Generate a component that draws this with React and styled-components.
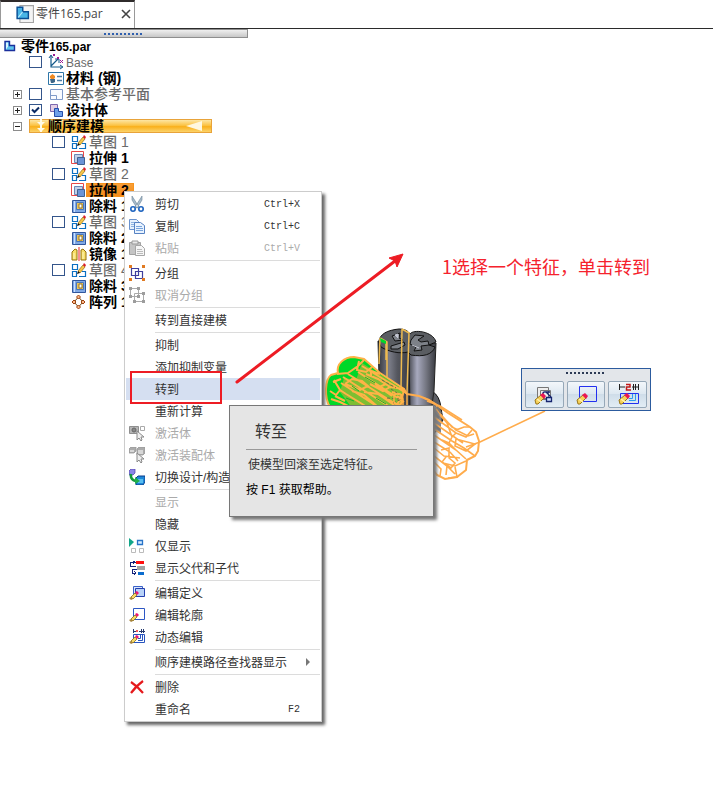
import React from "react";
import styled, { createGlobalStyle, css } from "styled-components";

function App() {
  return (
    <>
      <GlobalStyle />
      <Page>
        <TabStrip>
          <Tab>
            <PartTabIcon />
            <TabName href="#part">零件165.par</TabName>
            <CloseTab aria-label="关闭">
              <Icon $size={10} viewBox="0 0 10 10">
                <path d="M1 1L9 9M9 1L1 9" stroke="#444" strokeWidth="1.6" />
              </Icon>
            </CloseTab>
          </Tab>
        </TabStrip>
        <Workspace>
          <TreePane>
            <Grip>
              <Dots />
            </Grip>
            <Tree>
              {treeRows.map((row, i) => (
                <TreeItem key={i} id={`node-${i}`} {...row} />
              ))}
            </Tree>
          </TreePane>
          <Model />
          <CommandBar>
            <Dots $dark />
            <CommandRow>
              <Command aria-label="编辑定义">
                <EditDefinitionLarge />
              </Command>
              <Command aria-label="编辑轮廓">
                <EditProfileLarge />
              </Command>
              <Command aria-label="动态编辑">
                <DynamicEditLarge />
              </Command>
            </CommandRow>
          </CommandBar>
          <Menu>
            {menuRows.map((row, i) =>
              row === "-" ? (
                <Separator key={i} />
              ) : (
                <MenuItem key={i} $active={row.active} disabled={row.off}>
                  <MenuIcon>{row.icon}</MenuIcon>
                  <MenuText>{row.text}</MenuText>
                  {row.keys && <Shortcut>{row.keys}</Shortcut>}
                  {row.sub && <SubArrow />}
                </MenuItem>
              )
            )}
          </Menu>
          <Tooltip role="tooltip">
            <TipTitle>转至</TipTitle>
            <TipText>使模型回滚至选定特征。</TipText>
            <TipHelp>按 F1 获取帮助。</TipHelp>
          </Tooltip>
          <RedBox />
          <RedArrow viewBox="0 0 172 136">
            <path d="M2 133L160 12" stroke="#ed1c24" strokeWidth="3" strokeLinecap="round" />
            <path d="M168 5L162 18L160 12L154 9Z" fill="#ed1c24" stroke="#ed1c24" />
          </RedArrow>
          <Note>1选择一个特征，单击转到</Note>
        </Workspace>
      </Page>
    </>
  );
}

export default App;

function TreeItem({ id, level, open, check, icon, text, latin, bold, mark, band }) {
  return (
    <TreeRow $level={level}>
      {level === 1 && (
        <ExpandSlot>
          {open !== undefined && (
            <Expander aria-label={open ? "折叠" : "展开"}>
              <Icon $size={7} viewBox="0 0 7 7" shapeRendering="crispEdges">
                <path d={open ? "M1 3h5v1H1z" : "M1 3h5v1H1zM3 1h1v5H3z"} fill="#222" />
              </Icon>
            </Expander>
          )}
        </ExpandSlot>
      )}
      {band ? (
        <Band>
          {icon}
          <Name $bold>{text}</Name>
          <BandArrow viewBox="0 0 18 10">
            <path d="M1 5L17 0V10Z" fill="#fff8e0" />
          </BandArrow>
        </Band>
      ) : (
        <>
          {level > 0 && (
            <CheckSlot>
              {check !== undefined && (
                <Check id={id} type="checkbox" defaultChecked={check} />
              )}
            </CheckSlot>
          )}
          <IconSlot $small={level === 0}>{icon}</IconSlot>
          <Name as={check !== undefined ? "label" : "span"} htmlFor={check !== undefined ? id : undefined} $bold={bold} $mark={mark}>
            {text}
            {latin && <Latin>{latin}</Latin>}
          </Name>
        </>
      )}
    </TreeRow>
  );
}

const GlobalStyle = createGlobalStyle`
  * {
    box-sizing: border-box;
  }
  body {
    margin: 0;
    background: #fff;
    font-family: "Liberation Sans", "Noto Sans CJK SC", sans-serif;
    font-size: 12px;
  }
  button {
    font: inherit;
    color: inherit;
    padding: 0;
    border: 0;
    background: none;
  }
`;

const Page = styled.div`
  display: flex;
  flex-direction: column;
  min-height: 100vh;
  overflow: hidden;
`;

const TabStrip = styled.nav`
  display: flex;
  height: 29px;
  border-bottom: 1px solid #2b2b2b;
`;

const Tab = styled.div`
  display: flex;
  align-items: center;
  width: 135px;
  padding: 0 3px 2px 15px;
  border: 1px solid #999;
  border-top: 2px solid #2f2b2b;
  border-bottom: 0;
`;

const TabName = styled.a`
  flex: 1;
  margin-left: 2px;
  color: #444;
  font-family: "Open Sans", "Noto Sans CJK SC", sans-serif;
  line-height: 20px;
  text-decoration: none;
  white-space: nowrap;
`;

const CloseTab = styled.button`
  display: flex;
`;

const Workspace = styled.main`
  position: relative;
  display: flex;
  flex: 1;
`;

const TreePane = styled.aside`
  width: 248px;
`;

const Grip = styled.div`
  display: flex;
  align-items: center;
  justify-content: center;
  height: 9px;
  border: 1px solid #8e8e8e;
  border-left: 0;
  background: linear-gradient(#efefef, #c8c8c8);
`;

const Dots = styled.div`
  width: 40px;
  height: 2px;
  margin: ${(p) => (p.$dark ? "2px auto 7px" : "0")};
  background: repeating-linear-gradient(
    90deg,
    ${(p) => (p.$dark ? "#2c3a55" : "#2f5fae")} 0 2px,
    transparent 2px 4px
  );
`;

const Tree = styled.div`
  display: flex;
  flex-direction: column;
`;

const TreeRow = styled.div`
  display: flex;
  align-items: center;
  height: 16px;
  padding-left: ${(p) => [4, 13, 52][p.$level]}px;
`;

const ExpandSlot = styled.span`
  display: flex;
  width: 16px;
`;

const Expander = styled.button`
  display: flex;
  width: 9px;
  height: 9px;
  && {
    border: 1px solid #8c8c8c;
  }
`;

const CheckSlot = styled.span`
  display: flex;
  width: 19px;
`;

const Check = styled.input`
  appearance: none;
  width: 13px;
  height: 12px;
  margin: 0;
  border: 1px solid #34558b;
  background: #fff;

  &:checked {
    background: no-repeat center
      url("data:image/svg+xml,%3Csvg xmlns='http://www.w3.org/2000/svg' width='9' height='8'%3E%3Cpath d='M1 3.5L3.5 6L8 1.5' fill='none' stroke='%230b2a63' stroke-width='2'/%3E%3C/svg%3E");
  }
`;

const IconSlot = styled.span`
  display: flex;
  width: ${(p) => (p.$small ? 17 : 18)}px;
`;

const Name = styled.span`
  height: 14px;
  color: ${(p) => (p.$bold ? "#000" : "#6b6b6b")};
  font-family: "Liberation Sans", "Noto Sans CJK SC", sans-serif;
  font-size: 14px;
  font-weight: ${(p) => (p.$bold ? 700 : 500)};
  line-height: 14px;
  white-space: pre;

  ${(p) =>
    p.$mark &&
    css`
      width: 48px;
      margin-left: -3px;
      padding-left: 3px;
      background: linear-gradient(#f9a13a, #f28a17);
      box-shadow: inset 0 0 0 1px #f7941d;
    `}
`;

const Latin = styled.span`
  font-size: 12px;
`;

const Band = styled.div`
  display: flex;
  align-items: center;
  width: 183px;
  height: 14px;
  padding: 0 8px 0 4px;
  border: 1px solid #e8a33a;
  background: linear-gradient(#fde6a4, #fbc344 45%, #f9b01c 55%, #fcd36a);
`;

const BandArrow = styled.svg`
  width: 18px;
  height: 10px;
  margin-left: auto;
`;

const Icon = styled.svg`
  display: block;
  flex: none;
  width: ${(p) => p.$size || 16}px;
  height: ${(p) => p.$size || 16}px;
  fill: none;
`;

/* floating pieces over the drawing area */

const Menu = styled.div`
  position: absolute;
  left: 124px;
  top: 162px;
  width: 198px;
  padding: 1px;
  border: 1px solid #ccc;
  background: #fff;
  box-shadow: 3px 3px 3px #666;
`;

const MenuItem = styled.button`
  display: flex;
  align-items: center;
  width: 100%;
  height: 22px;
  && {
    padding: 0 20px 0 3px;
    color: ${(p) => (p.disabled ? "#aaa" : "#333")};
    background: ${(p) => (p.$active ? "#d5dff1" : "none")};
  }
`;

const MenuIcon = styled.span`
  display: flex;
  width: 26px;
`;

const MenuText = styled.span`
  flex: 1;
  padding-top: 2px;
  font-size: 12px;
  line-height: 16px;
  text-align: left;
  white-space: nowrap;
`;

const Shortcut = styled.span`
  font-family: "Liberation Mono", monospace;
  font-size: 10px;
`;

const SubArrow = styled.span`
  margin-right: -10px;
  border: 4px solid transparent;
  border-left-color: #777;
  border-right: 0;
`;

const Separator = styled.div`
  height: 1px;
  margin: 1px 0 1px 29px;
  background: #dcdcdc;
`;

const Tooltip = styled.div`
  position: absolute;
  left: 229px;
  top: 376px;
  width: 205px;
  padding: 12px 16px;
  border: 1px solid #777;
  background: #e5e5e5;
  box-shadow: 3px 3px 3px #777;
  color: #333;
`;

const TipTitle = styled.h2`
  margin: 0 0 4px;
  padding: 0 0 4px 9px;
  border-bottom: 1px solid #999;
  font-size: 16px;
  font-weight: 400;
  line-height: 27px;
`;

const TipText = styled.p`
  margin: 0;
  padding-left: 2px;
  line-height: 22px;
`;

const TipHelp = styled.p`
  margin: 0;
  color: #000;
  line-height: 28px;
`;

const CommandBar = styled.div`
  position: absolute;
  left: 521px;
  top: 339px;
  width: 130px;
  height: 43px;
  padding: 1px 3px;
  border: 1px solid #2c5b9e;
  background: #e3e6ea;
`;

const CommandRow = styled.div`
  display: flex;
  gap: 3px;
`;

const Command = styled.button`
  display: flex;
  flex: 1;
  align-items: center;
  justify-content: center;
  height: 27px;
  && {
    border: 1px solid #96a8b8;
    border-radius: 2px;
    background: linear-gradient(#f3f7fb, #dce7f0 50%, #cfdde9 50%, #e2edf5);
  }
`;

const RedBox = styled.div`
  position: absolute;
  left: 130px;
  top: 342px;
  width: 92px;
  height: 33px;
  border: 2px solid #ed1c24;
`;

const RedArrow = styled.svg`
  position: absolute;
  left: 235px;
  top: 220px;
  width: 172px;
  height: 136px;
  fill: none;
`;

const Note = styled.p`
  position: absolute;
  left: 442px;
  top: 224px;
  margin: 0;
  color: #f5222d;
  font-family: "Noto Sans CJK SC", sans-serif;
  font-size: 18px;
  line-height: 26px;
  white-space: nowrap;
`;

const ModelDrawing = styled.svg`
  position: absolute;
  left: 320px;
  top: 291px;
  width: 230px;
  height: 170px;
  fill: none;
`;

function Model() {
  return (
    <ModelDrawing viewBox="320 320 230 170">
      <defs>
        <linearGradient id="steel">
          <stop offset="0" stopColor="#34363c" />
          <stop offset="0.35" stopColor="#7b7d88" />
          <stop offset="0.6" stopColor="#55575f" />
          <stop offset="1" stopColor="#3b3d44" />
        </linearGradient>
        <linearGradient id="steelLight">
          <stop offset="0" stopColor="#4a4c54" />
          <stop offset="0.3" stopColor="#a7a9be" />
          <stop offset="0.65" stopColor="#72747f" />
          <stop offset="1" stopColor="#36383e" />
        </linearGradient>
      </defs>
      <path d="M432 391Q440 396 441 408L443 420L430 440V391Z" fill="#5d5f66" stroke="#111" />
      <path d="M378 341L380 412H410V345Z" fill="url(#steel)" stroke="#222" />
      <path d="M409 350L410 412H431L434 391L436 343Z" fill="url(#steelLight)" stroke="#222" />
      <path
        d="M379 342C379 334 388 330 399 329C405 329 408 331 410 334C413 329 433 331 436 342L429 345L435 347C432 355 423 357 411 355L408 352C400 354 389 352 381 347Z"
        fill="#5a5d62"
        stroke="#111"
      />
      <path
        d="M392 336L400 333L399 338L403 340L395 341ZM391 346L404 342L405 345L398 349L391 349ZM411 340L415 335L424 336L418 340L421 342L428 341L429 345L421 346L422 350L414 351L416 347L410 344Z"
        stroke="#111"
        fill="#7d8188"
      />
      <path d="M395 335L398 334V338ZM412 345L419 348" fill="#c5c8d4" stroke="#c5c8d4" />
      <path d="M380 338L387 342V384M380 338L379 364M402 329L409 333L407 393M402 329L401 388M386 342V360" stroke="#eebb50" strokeWidth="1.5" />
      <path d="M380 338L386 341V344L381 342Z" fill="#00d828" />

      {/* green end face of the selected extrusion */}
      <path
        d="M330 407C324 398 325 379 331 375L338 373C336 364 344 357 354 357L364 359L380 373L404 389L400 408Z"
        fill="#00d828"
        stroke="#ffb347"
        strokeWidth="2"
      />
      <path
        d="M362 363L404 390L400 408H352L340 392L344 378L356 380Z"
        fill="#e3a93d"
        fillOpacity=".55"
      />
      <path
        d="M337 374L348 373L358 366L364 360M359 361L357 370L366 372L372 367M358 372L404 402M362 366L406 393M348 374L399 406M343 377L390 407M341 383L378 407M334 380L340 390L336 395L330 391M333 382L341 379M340 390L346 394L367 407M331 399L340 402L350 407M335 396L345 401M345 384L352 379L362 381L368 386L360 390L345 384M366 374L378 379L390 387L383 391L370 384M371 377L371 371L380 374M377 388L386 384M352 391L364 395L378 407M364 392L378 394L394 405M375 384L392 396M390 387L404 389M392 392L402 395L396 407"
        stroke="#ffb347"
        strokeWidth="2"
      />
      <path d="M365 377L375 383M352 386L359 391M346 398L354 401M376 398L386 404" stroke="#14b52b" />
      <path d="M391 389L400 395M387 398L399 399M393 403L404 398M382 380L396 388" stroke="#6d6848" strokeDasharray="3 2" />
      <path d="M399 388L407 394V406M397 396L403 399V406M394 395Q402 391 403 400Q400 408 394 402Z" stroke="#ffb347" strokeWidth="1.5" />

      {/* wire frame on the near side */}
      <path d="M434 405L441 412L441 434L434 430Z" fill="#85878f" />
      <path
        d="M404 389L407 394L419 396L429 400L448 413L470 427L476 432L479 441L478 451L475 456L467 460L466 470L457 477L445 479L437 475L431 467"
        stroke="#ffac4c"
        strokeWidth="2"
      />
      <path
        d="M424 398L436 404L441 416L456 430L464 427L470 427M427 401L440 406L462 420M436 409L452 427L458 430M440 415L447 423L452 437M434 417L456 433L466 437L472 430M434 423L463 443M434 429L452 441L464 448M434 435L456 450M434 442L450 452L458 461M434 448L444 456L460 458M434 456L447 466L455 474M434 462L441 469L440 476M456 430L468 436L474 434M452 437L456 433M456 439L475 444L466 451L455 446ZM464 448L475 456M452 437L449 443L456 450L466 459M442 440L449 443M441 450L449 448L449 458L455 463L451 468L442 462L446 457M443 463L455 466L466 461M447 466L446 475M455 467L457 477L448 478"
        stroke="#ffac4c"
        strokeWidth="1.600"
      />
      <path d="M434 412L439 418M434 425L440 430M437 407L441 413" stroke="#777" strokeWidth="2" />
      <path d="M466 447L480 442L545 411" stroke="#ffac4c" strokeWidth="1.5" />
    </ModelDrawing>
  );
}

/* icons */

function PartTabIcon() {
  return (
    <Icon $size={18} viewBox="0 0 16 16">
      <path d="M3.5 .5h12v15h-12z" fill="#f4f4f4" stroke="#a5a5a5" />
      <path d="M1 2h5v4h5v6H1z" fill="#48b4e6" stroke="#0a4f96" strokeWidth="1.3" />
      <path d="M6 6L2 11" stroke="#b9ecff" />
    </Icon>
  );
}

const PartIcon = () => (
  <Icon $size={12} viewBox="0 0 12 12">
    <path d="M1 1.5h4.500v4h5v5H1z" fill="#5cc3ec" stroke="#1a2f9c" strokeWidth="1.4" />
    <path d="M2 2.500h2v4l-2 3z" fill="#d8f6ff" />
  </Icon>
);

const BaseIcon = () => (
  <Icon viewBox="0 0 16 16">
    <path d="M3 2v11h11M3 12L10 5" stroke="#155a8a" strokeWidth="1.2" />
    <path d="M1 4l2-3 2 3M12 11l3 2-3 2M7 5h4v4" stroke="#155a8a" />
    <path d="M5 0l2 2M7 0L5 2M9 3l2 2M11 3L9 5M12 6l3 3M15 6l-3 3" stroke="#9b1d94" />
  </Icon>
);

const MaterialIcon = () => (
  <Icon viewBox="0 0 16 14">
    <path d="M.5 1.500h15v12H.5z" fill="#fff" stroke="#2f76a8" />
    <path d="M2 5l2.500-2L7 5v2L4.500 9 2 7z" fill="#ef8a22" />
    <path d="M2 8h5v3l-2 1H3z" fill="#3d6688" />
    <path d="M9 5.500h5M9 9.500h5" stroke="#4f7fa8" strokeWidth="1.3" />
  </Icon>
);

const PlaneIcon = () => (
  <Icon viewBox="0 0 16 16">
    <path d="M2.500 3.500h12v10h-12z" fill="#f9fbff" stroke="#7f9ac9" />
    <path d="M2.500 9.500h6v4" stroke="#7f9ac9" />
  </Icon>
);

const BodyIcon = () => (
  <Icon viewBox="0 0 16 16">
    <path d="M2.500 2.500h7v7h-7z" fill="#e4cfe4" stroke="#7d68ae" />
    <path d="M6.500 6.500h4v3h4v5h-8z" fill="#6fa0e8" stroke="#234cab" />
  </Icon>
);

const OrderedIcon = () => (
  <Icon $size={14} viewBox="0 0 14 14">
    <path d="M7 0v13" stroke="#fffbe8" strokeWidth="2" />
    <path d="M3 3h8l-4 4zM3 9h8l-4 4z" fill="#fffbe8" />
  </Icon>
);

const SketchIcon = () => (
  <Icon viewBox="0 0 16 16">
    <path d="M1.500 2.500h5v5h-5zM1.500 9.500h4v5h-4zM8 14.500h6.500v-5H11" stroke="#0b6fc2" strokeWidth="1.2" />
    <path d="M7 9L12 3L14 5L9 11Z" fill="#f6c54a" stroke="#8b6a16" strokeWidth=".7" />
    <path d="M12 3l1-2 2 2-1 2z" fill="#dd1b2a" />
    <path d="M6 12l1-3 2 2z" fill="#111" />
  </Icon>
);

const ExtrudeIcon = () => (
  <Icon viewBox="0 0 16 16">
    <path d="M.5 1.500h12v12H.5z" fill="#fff" stroke="#e84848" />
    <path d="M3.500 4.500h8v8h-8z" fill="#c3d0e8" stroke="#6b86b5" />
    <path d="M6.500 7.500h7v7h-7z" fill="#6b94d6" stroke="#41618f" />
  </Icon>
);

const CutIcon = () => (
  <Icon viewBox="0 0 16 16">
    <path d="M1.500 2.500h13v12h-13z" fill="#80a9e5" stroke="#31569c" />
    <path d="M3.500 3v11" stroke="#cbe0ff" />
    <path d="M5.500 4.500h7v7h-7z" fill="#e9c35a" stroke="#4a74b8" />
    <path d="M8 6h3v4H8z" fill="#fff" stroke="#9a7421" />
  </Icon>
);

const MirrorIcon = () => (
  <Icon viewBox="0 0 16 16">
    <path d="M1 14V6l3-3 2 1v10zM15 14V6l-3-3-2 1v10z" fill="#f7df68" stroke="#96710a" />
    <path d="M3 7v6M12 6v7" stroke="#fff6be" />
    <path d="M8 1v14" stroke="#e22" />
  </Icon>
);

const PatternIcon = () => (
  <Icon viewBox="0 0 16 16">
    <path d="M7.500 3L12 8l-4.500 5L3 8z" stroke="#6b4212" />
    <path d="M7.500 1l2 2-2 2-2-2zM12 6l2 2-2 2-2-2zM7.500 11l2 2-2 2-2-2zM3 6l2 2-2 2-2-2z" fill="#f8b98a" stroke="#a2400b" />
  </Icon>
);

const ScissorsIcon = () => (
  <Icon viewBox="0 0 16 16">
    <path d="M3 0l7 11-2 1L3 4zM13 0L6 11l2 1 5-8z" fill="#a9bccb" stroke="#6c8598" strokeWidth=".6" />
    <circle cx="4" cy="13" r="2.200" stroke="#1d63bf" strokeWidth="1.600" />
    <circle cx="12" cy="13" r="2.200" stroke="#1d63bf" strokeWidth="1.600" />
  </Icon>
);

const CopyIcon = () => (
  <Icon viewBox="0 0 16 16">
    <path d="M.5 1.500h7l2 2v8h-9z" fill="#e6f0fc" stroke="#6a92cd" />
    <path d="M2 4.500h5M2 6.500h5M2 8.500h4" stroke="#8db3e2" />
    <path d="M5.500 4.500h6l4 3v8h-10z" fill="#e9f3ff" stroke="#5682c3" />
    <path d="M7 8.500h6M7 10.500h7M7 12.500h7" stroke="#78a4dc" />
  </Icon>
);

const PasteIcon = () => (
  <Icon viewBox="0 0 16 16">
    <path d="M.5 2.500h11v12H.5z" fill="#c4c4c4" stroke="#a2a2a2" />
    <path d="M3 1h6v3H3z" fill="#e8e8e8" stroke="#999" />
    <path d="M6.500 5.500h6l3 3v7h-9z" fill="#f6f6f6" stroke="#a6a6a6" />
    <path d="M8 9.500h5M8 11.500h6M8 13.500h6" stroke="#bbb" />
  </Icon>
);

const GroupIcon = () => (
  <Icon viewBox="0 0 16 16">
    <path d="M2.500 3.500h7v7h-7zM6.500 6.500h7v7h-7z" stroke="#3f3f9e" strokeWidth="1.200" />
    <path d="M0 0h3v3H0zM13 0h3v3h-3zM0 13h3v3H0zM13 13h3v3h-3z" fill="#e07a22" />
  </Icon>
);

const UngroupIcon = () => (
  <Icon viewBox="0 0 16 16">
    <path d="M1.500 1.500h8v8h-8zM5.500 6.500h9v8h-9z" stroke="#aaa" />
    <path d="M0 0h3v3H0zM8 0h3v3H8zM0 8h3v3H0zM13 5h3v3h-3zM4 13h3v3H4zM13 13h3v3h-3zM8 8h3v3H8z" fill="#9d9d9d" />
  </Icon>
);

const Pointer = () => (
  <path d="M8 6v9l2-2 2 3 1-1-1-3h3z" fill="#eee" stroke="#8a8a8a" />
);

const ActivateIcon = () => (
  <Icon viewBox="0 0 16 16">
    <path d="M.5 1.500h9v7h-9z" fill="#b5b5b5" stroke="#8f8f8f" />
    <circle cx="5" cy="5" r="2" fill="#888" stroke="#666" />
    <path d="M11.500 1.500h4v4h-4z" stroke="#aaa" />
    <Pointer />
  </Icon>
);

const ActivateAssemblyIcon = () => (
  <Icon viewBox="0 0 16 16">
    <path d="M0 2l2-2h5v4L5 6H0zM8 2l2-2h6v6l-2 2H8z" fill="#ababab" stroke="#979797" strokeWidth=".8" />
    <path d="M1 3h4v2H1zM9 3h5v4H9z" fill="#d7d7d7" />
    <Pointer />
  </Icon>
);

const SwitchIcon = () => (
  <Icon viewBox="0 0 16 16">
    <path d="M0 2l2-2h4v4L4 6H0z" fill="#8a87e8" stroke="#4f37a6" strokeWidth=".7" />
    <path d="M7 9l2-2h7v6l-2 3H7z" fill="#1d87d8" stroke="#0a3d8c" />
    <path d="M9 10h5v4H9z" fill="#58bdf0" />
    <path d="M2 5q-1 6 5 7" stroke="#159a3c" strokeWidth="2.500" />
    <path d="M6 8l5 4-5 3z" fill="#20b04b" />
  </Icon>
);

const ShowOnlyIcon = () => (
  <Icon viewBox="0 0 16 16">
    <path d="M0 0l5 4-5 5z" fill="#11a688" />
    <path d="M8.500 2.500h5v4h-5z" fill="#d8edff" stroke="#2773c8" strokeWidth="1.300" />
    <path d="M2.500 10.500h4v4h-4zM10.500 10.500h4v4h-4z" stroke="#bbb" />
  </Icon>
);

const ParentsIcon = () => (
  <Icon viewBox="0 0 16 16" shapeRendering="crispEdges">
    <path d="M7 1h8v3H7z" fill="#ff1010" />
    <path d="M8 6h8v4H8z" fill="#a3a3a3" />
    <path d="M9 12h6v3H9z" fill="#0a6cce" />
    <path d="M1 6V2.500h5M4 1l2 1.500L4 4M1 6.500h6M3 9.500h5M3 9v4.500h4M5 11l2 2-2 2" stroke="#14227a" />
  </Icon>
);

/* small pencil drawn over the edit icons */
const Pencil = () => (
  <>
    <path d="M2 12l4-4 2 2-4 4z" fill="#f7d767" stroke="#8c7019" strokeWidth=".8" />
    <path d="M0 13l2-1 2 2-2 1z" fill="#a7843c" />
    <path d="M6 7l2-1 2 2-2 2z" fill="#ed1470" />
  </>
);

const EditDefinitionIcon = () => (
  <Icon viewBox="0 0 16 16">
    <path d="M4.500 1.500h9v8h-9z" fill="#dbe8fc" stroke="#3b62c8" />
    <path d="M6.500 3.500h9v8h-9z" fill="#b8d2f8" stroke="#243faf" />
    <Pencil />
  </Icon>
);

const EditProfileIcon = () => (
  <Icon viewBox="0 0 16 16">
    <path d="M4.500 1.500h11v11h-11z" fill="#fff" stroke="#2d57c4" />
    <Pencil />
  </Icon>
);

const DynamicEditIcon = () => (
  <Icon viewBox="0 0 16 16">
    <path d="M4.500 5.500h11v8h-11zM13.500 6v5.500H9M11.500 6v3.500H9" stroke="#2854be" />
    <path d="M4.500 0v4M4 2.500h3M10 2.500h6M12.500 0v4M14.500 0v4" stroke="#24396e" />
    <path d="M8 1v2" stroke="#e22" strokeWidth="1.500" />
    <Pencil />
  </Icon>
);

const DeleteIcon = () => (
  <Icon viewBox="0 0 16 16">
    <path d="M2 3Q8 7 14 14M14 2Q7 7 2 14" stroke="#e5191c" strokeWidth="2.200" />
  </Icon>
);

const Eraser = () => (
  <>
    <path d="M3 17l6-5 3 3-6 6H4z" fill="#f7d25a" stroke="#9a7618" />
    <path d="M5 16l4 3" stroke="#fff3b3" strokeWidth="1.500" />
    <path d="M8 12l3-2 3 3-2 3z" fill="#ea1752" />
  </>
);

const EditDefinitionLarge = () => (
  <Icon $size={24} viewBox="0 0 24 24">
    <path d="M5.500 4.500h11v11h-11zM8.500 7.500h10v9h-10z" fill="#eee" stroke="#777" />
    <path d="M11 13q-1-5 3-4l5 5M14 9h4" stroke="#16246e" strokeWidth="1.300" />
    <path d="M14.500 14.500h5v4h-5z" fill="#cfe2ff" stroke="#16246e" strokeWidth="1.300" />
    <Eraser />
  </Icon>
);

const EditProfileLarge = () => (
  <Icon $size={24} viewBox="0 0 24 24">
    <path d="M5.500 3.500h17v15h-17z" stroke="#2330f0" />
    <Eraser />
  </Icon>
);

const DynamicEditLarge = () => (
  <Icon $size={24} viewBox="0 0 24 24">
    <path d="M3.500 1v6M3 4h6M16 4h7M17.500 1v6M19.500 1v6M22.500 1v6" stroke="#222" />
    <path d="M10 1.500h4v2.500h-3.500V7H15" stroke="#c01919" strokeWidth="1.500" />
    <path d="M4.500 10.500h18v10h-18z" stroke="#2330f0" />
    <path d="M19.500 11v6.500H13M16.500 11v4.500H13" stroke="#2b9cf0" />
    <Eraser />
  </Icon>
);

const treeRows = [
  { level: 0, icon: <PartIcon />, text: "零件", latin: "165.par", bold: true },
  { level: 1, check: false, icon: <BaseIcon />, text: "", latin: "Base" },
  { level: 1, icon: <MaterialIcon />, text: "材料 (钢)", bold: true },
  { level: 1, open: false, check: false, icon: <PlaneIcon />, text: "基本参考平面" },
  { level: 1, open: false, check: true, icon: <BodyIcon />, text: "设计体", bold: true },
  { level: 1, open: true, icon: <OrderedIcon />, text: "顺序建模", band: true },
  { level: 2, check: false, icon: <SketchIcon />, text: "草图 1" },
  { level: 2, icon: <ExtrudeIcon />, text: "拉伸 1", bold: true },
  { level: 2, check: false, icon: <SketchIcon />, text: "草图 2" },
  { level: 2, icon: <ExtrudeIcon />, text: "拉伸 2", bold: true, mark: true },
  { level: 2, icon: <CutIcon />, text: "除料 1", bold: true },
  { level: 2, check: false, icon: <SketchIcon />, text: "草图 3" },
  { level: 2, icon: <CutIcon />, text: "除料 2", bold: true },
  { level: 2, icon: <MirrorIcon />, text: "镜像 1", bold: true },
  { level: 2, check: false, icon: <SketchIcon />, text: "草图 4" },
  { level: 2, icon: <CutIcon />, text: "除料 3", bold: true },
  { level: 2, icon: <PatternIcon />, text: "阵列 1", bold: true },
];

const menuRows = [
  { icon: <ScissorsIcon />, text: "剪切", keys: "Ctrl+X" },
  { icon: <CopyIcon />, text: "复制", keys: "Ctrl+C" },
  { icon: <PasteIcon />, text: "粘贴", keys: "Ctrl+V", off: true },
  "-",
  { icon: <GroupIcon />, text: "分组" },
  { icon: <UngroupIcon />, text: "取消分组", off: true },
  "-",
  { text: "转到直接建模" },
  "-",
  { text: "抑制" },
  { text: "添加抑制变量" },
  { text: "转到", active: true },
  { text: "重新计算" },
  { icon: <ActivateIcon />, text: "激活体", off: true },
  { icon: <ActivateAssemblyIcon />, text: "激活装配体", off: true },
  { icon: <SwitchIcon />, text: "切换设计/构造" },
  "-",
  { text: "显示", off: true },
  { text: "隐藏" },
  { icon: <ShowOnlyIcon />, text: "仅显示" },
  { icon: <ParentsIcon />, text: "显示父代和子代" },
  "-",
  { icon: <EditDefinitionIcon />, text: "编辑定义" },
  { icon: <EditProfileIcon />, text: "编辑轮廓" },
  { icon: <DynamicEditIcon />, text: "动态编辑" },
  "-",
  { text: "顺序建模路径查找器显示", sub: true },
  "-",
  { icon: <DeleteIcon />, text: "删除" },
  { text: "重命名", keys: "F2" },
];
